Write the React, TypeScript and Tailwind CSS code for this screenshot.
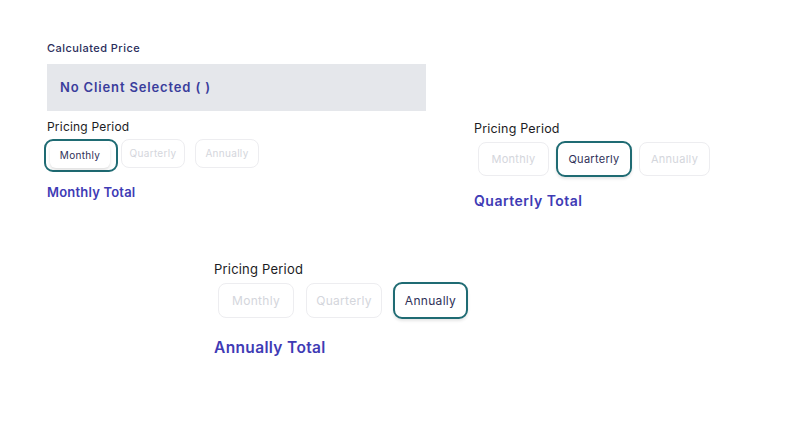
import React from 'react';

type Period = 'Monthly' | 'Quarterly' | 'Annually';

const periods: Period[] = ['Monthly', 'Quarterly', 'Annually'];

const font = { fontFamily: 'Inter, "Noto Sans", sans-serif' };

function App() {
  return (
    <div className="relative w-[800px] h-[441px] bg-white overflow-hidden" style={font}>
      {/* monthly view, with price box */}
      <div className="absolute left-[47px] top-[40px] w-[379px]">
        <div className="text-[11px] leading-4 font-medium tracking-[0.45px] text-[#2b2e5c]">Calculated Price</div>
        <div className="mt-2 h-[47px] bg-[#e5e7eb] flex items-center px-[13px]">
          <span className="text-[13px] font-semibold tracking-[0.85px] text-[#3a3d9c]">No Client Selected ( )</span>
        </div>
        <div className="mt-2 text-[12px] leading-4 tracking-[0.2px] text-[#1c1c24]">Pricing Period</div>
        <div className="flex items-start mt-[4px]">
          <div className="-ml-[3px] w-[74px] h-[33px] border-2 border-[#1f6b73] rounded-[9px] p-[2px] pl-[4px]">
            <div className="w-[60px] h-[25px] bg-white rounded-md shadow-[0_2px_3px_rgba(0,0,0,0.12)] flex items-center justify-center text-[10px] tracking-[0.3px] text-[#2f3158]">
              Monthly
            </div>
          </div>
          <div className="ml-[3px] w-[64px] h-[29px] border border-[#ededf0] rounded-lg flex items-center justify-center text-[10px] tracking-[0.3px] text-[#d4d6dc]">
            Quarterly
          </div>
          <div className="ml-[10px] w-[64px] h-[29px] border border-[#ededf0] rounded-lg flex items-center justify-center text-[10px] tracking-[0.3px] text-[#d4d6dc]">
            Annually
          </div>
        </div>
        <div className="mt-[11px] text-[13px] font-semibold tracking-[0.2px] text-[#3f3bb5]">Monthly Total</div>
      </div>

      {/* quarterly view */}
      <div className="absolute left-[474px] top-[121px]">
        <div className="text-[12.5px] leading-4 tracking-[0.2px] text-[#1c1c24]">Pricing Period</div>
        <div className="flex items-center mt-[4px] ml-[4px] gap-[7px]">
          {periods.map((p) => (
            <div
              key={p}
              className={
                p === 'Quarterly'
                  ? 'w-[76px] h-[36px] border-2 border-[#1f6b73] rounded-[9px] flex items-center justify-center text-[11px] tracking-[0.3px] text-[#2f3158] shadow-[0_2px_3px_rgba(0,0,0,0.1)]'
                  : 'w-[71px] h-[34px] border border-[#ededf0] rounded-lg flex items-center justify-center text-[11px] tracking-[0.3px] text-[#d4d6dc]'
              }
            >
              {p}
            </div>
          ))}
        </div>
        <div className="mt-[13px] text-[14px] font-semibold tracking-[0.5px] text-[#3f3bb5]">Quarterly Total</div>
      </div>

      {/* annually view */}
      <div className="absolute left-[214px] top-[260px]">
        <div className="text-[13px] leading-[18px] tracking-[0.2px] text-[#1c1c24]">Pricing Period</div>
        <div className="flex items-center mt-[4px] ml-[4px] gap-[12px]">
          {periods.map((p) => (
            <div
              key={p}
              className={
                p === 'Annually'
                  ? '-ml-[1px] w-[75px] h-[37px] border-2 border-[#1f6b73] rounded-[9px] flex items-center justify-center text-[12px] tracking-[0.3px] text-[#2f3158] shadow-[0_2px_3px_rgba(0,0,0,0.1)]'
                  : 'w-[76px] h-[35px] border border-[#ededf0] rounded-lg flex items-center justify-center text-[12px] tracking-[0.3px] text-[#d4d6dc]'
              }
            >
              {p}
            </div>
          ))}
        </div>
        <div className="mt-[17px] text-[15.5px] font-semibold tracking-[0.35px] text-[#3f3bb5]">Annually Total</div>
      </div>
    </div>
  );
}

export default App;
